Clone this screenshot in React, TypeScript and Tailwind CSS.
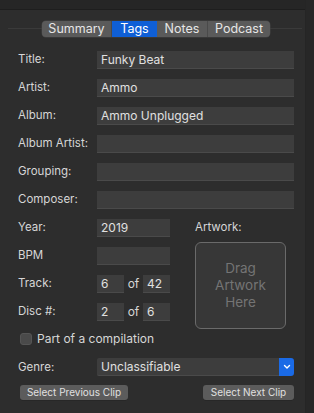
import React from "react";

const font = { fontFamily: "Inter, 'Noto Sans', sans-serif" };

function Field({ className = "", children }: { className?: string; children?: React.ReactNode }) {
  return (
    <div className={`h-[18px] bg-[#3d3d3d] border-b border-[#4a4a4a] text-[#e0e0e0] text-[12px] leading-[18px] px-[4px] ${className}`}>
      {children}
    </div>
  );
}

function Row({ label, children }: { label: string; children?: React.ReactNode }) {
  return (
    <div className="flex items-center h-[28px]">
      <div className="w-[79px] text-[11.5px] text-[#d6d6d6]">{label}</div>
      {children}
    </div>
  );
}

export default function App() {
  return (
    <div className="w-[314px] h-[413px] bg-[#2d2d2d] relative overflow-hidden" style={font}>
      <div className="h-[10px] bg-[#262626] border-b border-[#1e1e1e]" />
      <div className="absolute right-0 top-0 bottom-0 w-[9px] bg-[#272727] border-l border-[#252525]" />
      <div className="relative h-[31px]">
        <div className="absolute left-[8px] right-[12px] top-[18px] h-px bg-[#3a3a3a]" />
        <div className="absolute left-[42px] top-[11px] flex h-[16px] rounded-[4px] overflow-hidden bg-[#5a5a5a] text-[12.5px] leading-[16px] text-[#e6e6e6] shadow-[0_0_0_0.5px_#444]">
          <div className="w-[70px] text-center border-r border-[#4a4a4a]">Summary</div>
          <div className="w-[45px] text-center bg-[#0f5fd6] text-white">Tags</div>
          <div className="w-[51px] text-center border-r border-[#4a4a4a]">Notes</div>
          <div className="w-[62px] text-center">Podcast</div>
        </div>
      </div>
      <div className="pl-[18px] pr-[20px] pt-[5px]">
        <Row label="Title:"><Field className="flex-1">Funky Beat</Field></Row>
        <Row label="Artist:"><Field className="flex-1">Ammo</Field></Row>
        <Row label="Album:"><Field className="flex-1">Ammo Unplugged</Field></Row>
        <Row label="Album Artist:"><Field className="flex-1" /></Row>
        <Row label="Grouping:"><Field className="flex-1" /></Row>
        <Row label="Composer:"><Field className="flex-1" /></Row>
        <div className="flex">
          <div className="w-[177px]">
            <Row label="Year:"><Field className="w-[73px]">2019</Field></Row>
            <Row label="BPM"><Field className="w-[73px]" /></Row>
            <Row label="Track:">
              <Field className="w-[27px]">6</Field>
              <span className="w-[19px] text-center text-[12px] text-[#d6d6d6]">of</span>
              <Field className="w-[27px]">42</Field>
            </Row>
            <Row label="Disc #:">
              <Field className="w-[27px]">2</Field>
              <span className="w-[19px] text-center text-[12px] text-[#d6d6d6]">of</span>
              <Field className="w-[27px]">6</Field>
            </Row>
          </div>
          <div className="flex flex-col">
            <div className="h-[28px] flex items-center text-[11.5px] text-[#d6d6d6]">Artwork:</div>
            <div className="w-[91px] h-[87px] rounded-[6px] border-[1.5px] border-[#6a6a6a] bg-[#373737] flex items-center justify-center text-center text-[13.5px] leading-[17px] text-[#747474]">
              Drag<br />Artwork<br />Here
            </div>
          </div>
        </div>
        <div className="flex items-center h-[24px] -mt-[2px] pl-[2px] gap-[5px]">
          <div className="w-[12px] h-[12px] rounded-[3px] bg-[#4a4a4a] border border-[#555]" />
          <span className="text-[12px] text-[#d6d6d6]">Part of a compilation</span>
        </div>
        <div className="flex items-center h-[28px] mt-[2px]">
          <div className="w-[79px] text-[11.5px] text-[#d6d6d6] pt-[2px]">Genre:</div>
          <div className="flex-1 flex h-[18px]">
            <div className="flex-1 bg-[#3d3d3d] border-b border-[#4a4a4a] text-[12px] leading-[18px] px-[4px] text-[#e0e0e0] rounded-l-[2px]">Unclassifiable</div>
            <div className="w-[15px] bg-[#1a6ae6] rounded-r-[3px] flex items-center justify-center">
              <svg width="8" height="6" viewBox="0 0 8 6"><path d="M1.5 1.5 L4 4 L6.5 1.5" stroke="white" strokeWidth="1.4" fill="none" strokeLinecap="round" strokeLinejoin="round" /></svg>
            </div>
          </div>
        </div>
        <div className="flex justify-between pl-[2px] mt-[4px]">
          <div className="w-[108px] h-[15px] rounded-[3px] bg-[#5c5c5c] text-[10px] leading-[15px] text-center text-[#e0e0e0] shadow-[0_0.5px_0_#222]">Select Previous Clip</div>
          <div className="w-[91px] h-[15px] rounded-[3px] bg-[#5c5c5c] text-[10px] leading-[15px] text-center text-[#e0e0e0] shadow-[0_0.5px_0_#222]">Select Next Clip</div>
        </div>
      </div>
    </div>
  );
}
